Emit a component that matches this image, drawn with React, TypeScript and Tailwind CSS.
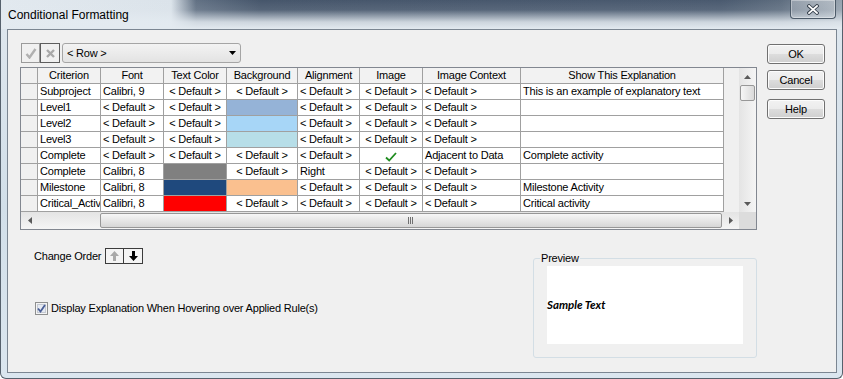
import React from "react";

type Cell = { t?: string; fill?: string; check?: boolean };

const D = "< Default >";

const cols = [
  { label: "Criterion", w: "w-[63px]", align: "text-left" },
  { label: "Font", w: "w-[63px]", align: "text-left" },
  { label: "Text Color", w: "w-[63px]", align: "text-center" },
  { label: "Background", w: "w-[71px]", align: "text-center" },
  { label: "Alignment", w: "w-[62px]", align: "text-left" },
  { label: "Image", w: "w-[63px]", align: "text-center" },
  { label: "Image Context", w: "w-[98px]", align: "text-left" },
  { label: "Show This Explanation", w: "w-[203px]", align: "text-left" },
];

const rows: Cell[][] = [
  [{ t: "Subproject" }, { t: "Calibri, 9" }, { t: D }, { t: D }, { t: D }, { t: D }, { t: D }, { t: "This is an example of explanatory text" }],
  [{ t: "Level1" }, { t: D }, { t: D }, { fill: "bg-[#95b3d7]" }, { t: D }, { t: D }, { t: D }, {}],
  [{ t: "Level2" }, { t: D }, { t: D }, { fill: "bg-[#a7d6f7]" }, { t: D }, { t: D }, { t: D }, {}],
  [{ t: "Level3" }, { t: D }, { t: D }, { fill: "bg-[#b7dee8]" }, { t: D }, { t: D }, { t: D }, {}],
  [{ t: "Complete" }, { t: D }, { t: D }, { t: D }, { t: D }, { check: true }, { t: "Adjacent to Data" }, { t: "Complete activity" }],
  [{ t: "Complete" }, { t: "Calibri, 8" }, { fill: "bg-[#808080]" }, { t: D }, { t: "Right" }, { t: D }, { t: D }, {}],
  [{ t: "Milestone" }, { t: "Calibri, 8" }, { fill: "bg-[#1f497d]" }, { fill: "bg-[#fac08f]" }, { t: D }, { t: D }, { t: D }, { t: "Milestone Activity" }],
  [{ t: "Critical_Activity" }, { t: "Calibri, 8" }, { fill: "bg-[#ff0000]" }, { t: D }, { t: D }, { t: D }, { t: D }, { t: "Critical activity" }],
];

const Tri = ({ dir }: { dir: "up" | "down" | "left" | "right" }) => {
  const pts = {
    up: "0,4 3.5,0 7,4",
    down: "0,0 7,0 3.5,4",
    left: "4,0 4,7 0,3.5",
    right: "0,0 0,7 4,3.5",
  }[dir];
  const w = dir === "up" || dir === "down" ? 7 : 4;
  const h = dir === "up" || dir === "down" ? 4 : 7;
  return (
    <svg width={w} height={h} viewBox={`0 0 ${w} ${h}`}>
      <polygon points={pts} fill="#5a5a5a" />
    </svg>
  );
};

const WinButton = ({ label, className }: { label: string; className?: string }) => (
  <div
    className={`w-[58px] h-[20px] rounded-[3px] border border-[#707070] bg-[linear-gradient(to_bottom,#f2f2f2_0%,#ebebeb_50%,#dddddd_50%,#cfcfcf_100%)] shadow-[inset_0_0_0_1px_#fcfcfc] flex items-center justify-center text-[11px] ${className ?? ""}`}
  >
    {label}
  </div>
);

const Grid = () => (
  <div className="mt-[4px] w-[737px] h-[163px] border border-[#828790] flex flex-col bg-[#f0f0f0]">
    <div className="flex h-[144px]">
      <div className="w-[718px] overflow-hidden">
        <div className="flex">
          <div className="w-[17px] h-[16px] border-r border-b border-[#a0a0a0] bg-[#f0f0f0]" />
          {cols.map((c) => (
            <div
              key={c.label}
              className={`${c.w} h-[16px] border-r border-b border-[#a0a0a0] bg-[#f2f2f2] text-center leading-[15px] whitespace-nowrap overflow-hidden`}
            >
              {c.label}
            </div>
          ))}
        </div>
        {rows.map((r, i) => (
          <div key={i} className="flex">
            <div className="w-[17px] h-[16px] border-r border-b border-[#a0a0a0] bg-[#f0f0f0]" />
            {r.map((cell, j) => (
              <div
                key={j}
                className={`${cols[j].w} ${cols[j].align} h-[16px] border-r border-b border-[#a0a0a0] px-[2px] leading-[15px] whitespace-nowrap overflow-hidden ${cell.fill ?? "bg-white"}`}
              >
                {cell.check ? (
                  <svg width="12" height="10" viewBox="0 0 12 10" className="inline-block mt-[2px]">
                    <path d="M1 5.5 L4.2 8.5 L11 1" fill="none" stroke="#1f8c1f" strokeWidth="1.8" />
                  </svg>
                ) : (
                  cell.t
                )}
              </div>
            ))}
          </div>
        ))}
      </div>
      <div className="w-[17px] flex flex-col bg-[linear-gradient(to_right,#e4e4e4,#f5f5f5)]">
        <div className="h-[17px] flex items-center justify-center">
          <Tri dir="up" />
        </div>
        <div className="mx-[1px] h-[16px] rounded-[2px] border border-[#979797] bg-[linear-gradient(to_right,#f6f6f6,#dadada)]" />
        <div className="flex-1" />
        <div className="h-[17px] flex items-center justify-center">
          <Tri dir="down" />
        </div>
      </div>
    </div>
    <div className="flex h-[17px]">
      <div className="w-[718px] flex items-center bg-[linear-gradient(to_bottom,#e4e4e4,#f5f5f5)]">
        <div className="w-[17px] flex items-center justify-center">
          <Tri dir="left" />
        </div>
        <div className="ml-[62px] w-[622px] h-[15px] rounded-[2px] border border-[#979797] bg-[linear-gradient(to_bottom,#f7f7f7,#d6d6d6)] flex items-center justify-center">
          <svg width="6" height="7" viewBox="0 0 6 7">
            <path d="M0.5 0 V7 M2.5 0 V7 M4.5 0 V7" stroke="#707070" strokeWidth="1" />
          </svg>
        </div>
        <div className="w-[17px] flex items-center justify-center">
          <Tri dir="right" />
        </div>
      </div>
      <div className="w-[17px] bg-[#dcdcdc]" />
    </div>
  </div>
);

const Arrow = ({ color }: { color: string }) => (
  <svg width="9" height="10" viewBox="0 0 9 10">
    <polygon points="4.5,0 9,5 6,5 6,10 3,10 3,5 0,5" fill={color} />
  </svg>
);

export default function App() {
  return (
    <div className="w-[843px] h-[379px] overflow-hidden rounded-b-[6px] border-x border-b border-[#56616d] bg-[linear-gradient(to_bottom,#dfe7ee,#d2dfe9_55%,#dbe6ef)] font-['Liberation_Sans',Arial,sans-serif] text-black">
      <div className="h-[29px] flex items-start bg-[linear-gradient(to_bottom,rgba(228,235,241,0)_0px,rgba(228,235,241,0.1)_10px,rgba(228,235,241,0.85)_22px,#e3eaf0_29px),linear-gradient(to_right,#e2e9ef_0px,#dbe3ea_170px,#627184_195px,#46566b_260px,#4a5a6f_720px,#5e6d7f_780px,#98a4b0_842px)]">
        <span className="pl-[7px] pt-[8px] text-[12px] leading-[14px]">Conditional Formatting</span>
        <div className="ml-auto mr-[6px] w-[46px] h-[19px] rounded-b-[4px] border border-t-0 border-[#4d5b69] bg-[linear-gradient(to_bottom,rgba(255,255,255,0.3),rgba(255,255,255,0.12))] shadow-[inset_0_0_0_1px_rgba(255,255,255,0.35)] flex items-center justify-center">
          <svg width="12" height="11" viewBox="0 0 12 11">
            <path d="M2 2 L10 9 M10 2 L2 9" stroke="#38424e" strokeWidth="3.6" strokeLinecap="square" />
            <path d="M2 2 L10 9 M10 2 L2 9" stroke="#ffffff" strokeWidth="1.7" strokeLinecap="square" />
          </svg>
        </div>
      </div>
      <div className="ml-[6px] w-[830px] h-[344px] border border-[#7b8692] bg-[#f0f0f0] flex text-[11px] tracking-[-0.2px]">
        <div className="pl-[12px] pt-[13px] w-[749px] flex flex-col">
          <div className="ml-[1px] flex h-[20px]">
            <div className="w-[19px] h-[20px] border border-[#9a9a9a] bg-[#f0f0f0] flex items-center justify-center">
              <svg width="12" height="11" viewBox="0 0 12 11">
                <path d="M1.5 6 L4.5 9.5 L10.5 1" fill="none" stroke="#b0b0b0" strokeWidth="2.4" />
              </svg>
            </div>
            <div className="w-[20px] h-[20px] border border-[#5e5e5e] bg-[#f0f0f0] flex items-center justify-center">
              <svg width="11" height="11" viewBox="0 0 11 11">
                <path d="M2 2 L9 9 M9 2 L2 9" stroke="#a8a8a8" strokeWidth="2.4" />
              </svg>
            </div>
            <div className="ml-[2px] w-[179px] h-[20px] rounded-[3px] border border-[#a5a5a5] bg-[linear-gradient(to_bottom,#f3f3f3,#e3e3e3)] flex items-center pl-[4px] pr-[4px]">
              <span className="text-[11px]">&lt; Row &gt;</span>
              <span className="ml-auto">
                <svg width="7" height="4" viewBox="0 0 7 4">
                  <polygon points="0,0 7,0 3.5,4" fill="#000" />
                </svg>
              </span>
            </div>
          </div>
          <Grid />
          <div className="flex justify-between">
            <div className="flex flex-col">
              <div className="mt-[18px] ml-[14px] flex items-center gap-[4px]">
                <span>Change Order</span>
                <div className="flex border border-[#3c3c3c]">
                  <div className="w-[18px] h-[14px] border-r border-[#3c3c3c] bg-[#f4f4f4] flex items-center justify-center">
                    <Arrow color="#a9a9a9" />
                  </div>
                  <div className="w-[18px] h-[14px] bg-[#f4f4f4] flex items-center justify-center">
                    <svg width="9" height="10" viewBox="0 0 9 10" className="rotate-180">
                      <polygon points="4.5,0 9,5 6,5 6,10 3,10 3,5 0,5" fill="#000" />
                    </svg>
                  </div>
                </div>
              </div>
              <div className="mt-[37px] ml-[15px] flex items-center gap-[3px] h-[13px]">
                <svg width="13" height="13" viewBox="0 0 13 13">
                  <rect x="0.5" y="0.5" width="12" height="12" fill="#f4f4f4" stroke="#8e8f8f" />
                  <rect x="2.5" y="2.5" width="8" height="8" fill="#e6eaf2" stroke="#c4c9d2" />
                  <path d="M3 6.5 L5.5 9.5 L10 3" fill="none" stroke="#4a5f97" strokeWidth="1.8" />
                </svg>
                <span>Display Explanation When Hovering over Applied Rule(s)</span>
              </div>
            </div>
            <div className="mt-[28px] relative w-[224px] h-[100px] rounded-[3px] border border-[#d3dee5]">
              <span className="absolute left-[6px] top-[-8px] bg-[#f0f0f0] px-[1px] leading-[14px]">Preview</span>
              <div className="ml-[13px] mt-[7px] w-[196px] h-[78px] bg-white flex items-center">
                <span className="font-['Lato',sans-serif] font-bold italic text-[11.5px] tracking-normal">Sample Text</span>
              </div>
            </div>
          </div>
        </div>
        <div className="ml-[10px] pt-[14px] flex flex-col">
          <WinButton label="OK" />
          <WinButton label="Cancel" className="mt-[6px]" />
          <WinButton label="Help" className="mt-[9px]" />
        </div>
      </div>
    </div>
  );
}
